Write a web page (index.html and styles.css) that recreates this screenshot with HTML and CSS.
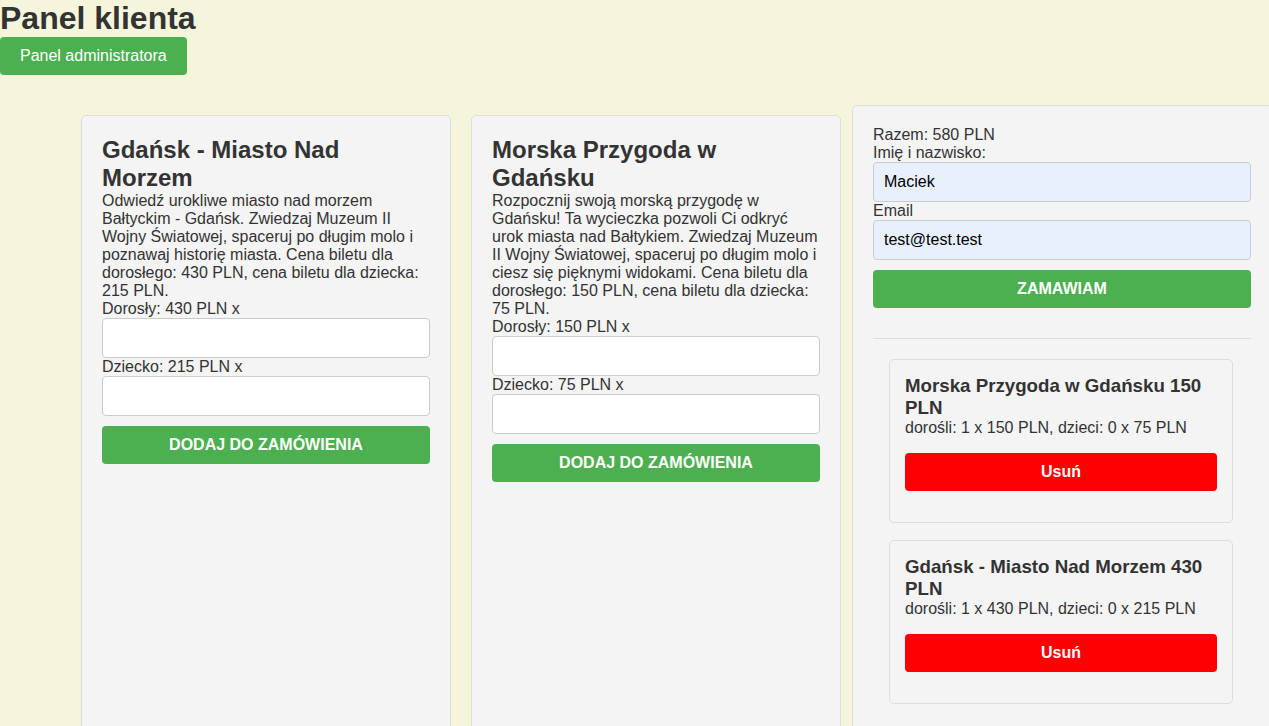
FILE: index.html
```html
<!DOCTYPE html>
<html lang="pl">
<head>
<meta charset="utf-8">
<title>Panel klienta</title>
<link rel="stylesheet" href="styles.css">
</head>
<body>
<h1 class="page-title">Panel klienta</h1>
<a class="admin-btn" href="#">Panel administratora</a>

<div class="layout">
  <div class="card">
    <h2 class="card-title">Gdańsk - Miasto Nad Morzem</h2>
    <p class="card-desc">Odwiedź urokliwe miasto nad morzem Bałtyckim - Gdańsk. Zwiedzaj Muzeum II Wojny Światowej, spaceruj po długim molo i poznawaj historię miasta. Cena biletu dla dorosłego: 430 PLN, cena biletu dla dziecka: 215 PLN.</p>
    <label class="field-label">Dorosły: 430 PLN x</label>
    <input class="field" type="number">
    <label class="field-label">Dziecko: 215 PLN x</label>
    <input class="field" type="number">
    <button class="green-btn">Dodaj do zamówienia</button>
  </div>

  <div class="card">
    <h2 class="card-title">Morska Przygoda w Gdańsku</h2>
    <p class="card-desc">Rozpocznij swoją morską przygodę w Gdańsku! Ta wycieczka pozwoli Ci odkryć urok miasta nad Bałtykiem. Zwiedzaj Muzeum II Wojny Światowej, spaceruj po długim molo i ciesz się pięknymi widokami. Cena biletu dla dorosłego: 150 PLN, cena biletu dla dziecka: 75 PLN.</p>
    <label class="field-label">Dorosły: 150 PLN x</label>
    <input class="field" type="number">
    <label class="field-label">Dziecko: 75 PLN x</label>
    <input class="field" type="number">
    <button class="green-btn">Dodaj do zamówienia</button>
  </div>

  <div class="cart">
    <div class="total">Razem: 580 PLN</div>
    <label class="field-label">Imię i nazwisko:</label>
    <input class="field filled" type="text" value="Maciek">
    <label class="field-label">Email</label>
    <input class="field filled" type="text" value="test@test.test">
    <button class="green-btn">Zamawiam</button>
    <hr class="divider">

    <div class="item">
      <h3 class="item-title">Morska Przygoda w Gdańsku 150 PLN</h3>
      <p class="item-desc">dorośli: 1 x 150 PLN, dzieci: 0 x 75 PLN</p>
      <button class="red-btn">Usuń</button>
    </div>

    <div class="item">
      <h3 class="item-title">Gdańsk - Miasto Nad Morzem 430 PLN</h3>
      <p class="item-desc">dorośli: 1 x 430 PLN, dzieci: 0 x 215 PLN</p>
      <button class="red-btn">Usuń</button>
    </div>
  </div>
</div>
</body>
</html>
```

FILE: styles.css
```css
html, body {
  overflow-x: hidden;
}

body {
  margin: 0;
  background: #f5f5dc;
  color: #333;
  font-family: "Liberation Sans", Arial, sans-serif;
  font-size: 16px;
}

.page-title {
  margin: 0;
  font-size: 32px;
  font-weight: bold;
  color: #333;
}

.admin-btn {
  display: inline-block;
  background: #4caf50;
  color: #fff;
  text-decoration: none;
  padding: 10px 20px;
  border-radius: 4px;
  font-size: 16px;
}

.layout {
  display: flex;
  align-items: stretch;
  padding-top: 30px;
  padding-left: 71px;
  width: max-content;
}

.card {
  width: 328px;
  margin: 10px;
  padding: 20px;
  background: #f4f4f4;
  border: 1px solid #ddd;
  border-radius: 5px;
}

.card-title {
  margin: 0;
  font-size: 24px;
  font-weight: bold;
  color: #333;
}

.card-desc {
  margin: 0;
}

.field-label {
  display: block;
}

.field {
  display: block;
  width: 100%;
  box-sizing: border-box;
  padding: 10px;
  border: 1px solid #ccc;
  border-radius: 4px;
  background: #fff;
  font-family: "Liberation Sans", Arial, sans-serif;
  font-size: 16px;
  color: #000;
}

.field.filled {
  background: #e8f0fe;
}

.green-btn {
  display: block;
  width: 100%;
  margin-top: 10px;
  padding: 10px;
  border: none;
  border-radius: 4px;
  background: #4caf50;
  color: #fff;
  font-family: "Liberation Sans", Arial, sans-serif;
  font-size: 16px;
  font-weight: bold;
  text-transform: uppercase;
}

.cart {
  width: 378px;
  margin: 0 0 0 1px;
  padding: 20px;
  background: #f4f4f4;
  border: 1px solid #ddd;
  border-radius: 5px;
}

.divider {
  margin: 30px 0 20px;
  height: 0;
  border: none;
  border-top: 1px solid #ddd;
}

.item {
  margin: 0 18px 17px 16px;
  padding: 15px;
  border: 1px solid #ddd;
  border-radius: 5px;
  background: #f4f4f4;
}

.item-title {
  margin: 0;
  font-size: 18.72px;
  font-weight: bold;
  color: #333;
}

.item-desc {
  margin: 0;
}

.red-btn {
  display: block;
  width: 100%;
  margin: 16px 0;
  padding: 10px;
  border: none;
  border-radius: 4px;
  background: #ff0000;
  color: #fff;
  font-family: "Liberation Sans", Arial, sans-serif;
  font-size: 16px;
  font-weight: bold;
}
```
